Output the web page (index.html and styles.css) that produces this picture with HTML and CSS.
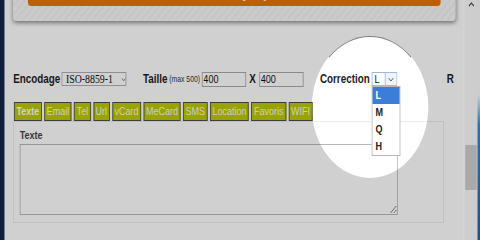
FILE: index.html
```html
<!DOCTYPE html>
<html>
<head>
    <title>QR Code</title>
    <link rel="stylesheet" href="styles.css">
</head>
<body>
    <div class="shot">
        <div class="frame-left"></div>
        <div class="page">
            <div class="card">
                <button class="submit" type="button">Submit Query</button>
            </div>
            <form class="options">
                <div class="row">
                    <div class="grp">
                        <label class="lbl">Encodage</label>
                        <div class="sel sel-enc">
                            <span class="val">ISO-8859-1</span>
                            <svg class="chev" width="7" height="5" viewBox="0 0 7 5"><polyline points="0.5,1 3.5,4 6.5,1" fill="none" stroke="#555" stroke-width="1"/></svg>
                        </div>
                    </div>
                    <div class="grp">
                        <label class="lbl">Taille</label>
                        <span class="hint">(max 500)</span>
                        <input class="num" type="text" value="400">
                        <span class="lbl times">X</span>
                        <input class="num" type="text" value="400">
                    </div>
                    <div class="grp">
                        <label class="lbl">Correction</label>
                        <div class="sel sel-cor">
                            <span class="val">L</span>
                            <span class="arrow">
                                <svg width="7" height="5" viewBox="0 0 7 5"><polyline points="0.5,1 3.5,4 6.5,1" fill="none" stroke="#555" stroke-width="1"/></svg>
                            </span>
                            <ul class="dropdown">
                                <li class="active">L</li>
                                <li>M</li>
                                <li>Q</li>
                                <li>H</li>
                            </ul>
                        </div>
                    </div>
                    <div class="grp grp-last">
                        <label class="lbl">R</label>
                    </div>
                </div>

                <div class="tabs">
                    <button type="button" class="tab active">Texte</button>
                    <button type="button" class="tab">Email</button>
                    <button type="button" class="tab">Tel</button>
                    <button type="button" class="tab">Url</button>
                    <button type="button" class="tab">vCard</button>
                    <button type="button" class="tab">MeCard</button>
                    <button type="button" class="tab">SMS</button>
                    <button type="button" class="tab">Location</button>
                    <button type="button" class="tab">Favoris</button>
                    <button type="button" class="tab">WIFI</button>
                </div>

                <div class="panel">
                    <label class="panel-label" for="texte">Texte</label>
                    <textarea id="texte"></textarea>
                </div>
            </form>
            <div class="spot"></div>
        </div>
        <div class="scrollbar">
            <svg class="up" width="7" height="5" viewBox="0 0 7 5"><polyline points="0.5,4 3.5,1 6.5,4" fill="none" stroke="#333" stroke-width="1.2"/></svg>
            <div class="thumb"></div>
        </div>
        <div class="frame-right"></div>
    </div>
</body>
</html>
```

FILE: styles.css
```css
* {
    box-sizing: border-box;
    font-family: 'Liberation Sans', Arial, sans-serif;
}

html, body {
    margin: 0;
    padding: 0;
    width: 480px;
    height: 240px;
    overflow: hidden;
    background-color: #d0d0d0;
}

/* the capture is squeezed horizontally */
.shot {
    display: flex;
    width: 585px;
    height: 240px;
    transform: scaleX(0.8205);
    transform-origin: 0 0;
}

.frame-left {
    width: 6px;
    background-color: #0e1e3c;
    border-right: 1px solid #7d8593;
}

.frame-right {
    width: 3px;
    background: linear-gradient(#c9ccd1 0, #c9ccd1 95px, #2b6fb6 125px, #1b4f8f 240px);
}

.page {
    position: relative;
    flex: 1;
    overflow: hidden;
    background-color: #ffffff;
}

.card {
    margin: -26px 10px 0;
    padding: 10px 18px 15px;
    border-radius: 0 0 4px 4px;
    background: repeating-linear-gradient(-45deg, #f3f3f3 0, #f3f3f3 3px, #f9f9f9 3px, #f9f9f9 6px);
    box-shadow: 0 2px 5px rgba(0, 0, 0, 0.45);
}

.submit {
    display: block;
    width: 100%;
    height: 22px;
    padding: 0 0 3px;
    border: none;
    border-radius: 4px;
    background-color: #eb7600;
    color: white;
    font-size: 14px;
    line-height: 19px;
}

.options {
    margin: 50px 10px 0;
    overflow: hidden;
}

.row {
    display: flex;
    align-items: center;
    height: 16px;
    white-space: nowrap;
}

.grp {
    display: flex;
    align-items: center;
    gap: 2px;
    margin-right: 20px;
}

.grp-last {
    margin-left: 41px;
}

.lbl {
    color: #222;
    font-size: 12px;
    font-weight: bold;
}

.times {
    margin: 0 2px;
}

.hint {
    color: #333;
    font-size: 8.4px;
}

.num {
    width: 54px;
    height: 15px;
    margin: 0;
    padding: 0 1px;
    border: 1px solid #aaa;
    background: white;
    color: #111;
    font-size: 11px;
    outline: none;
}

.sel {
    position: relative;
    display: flex;
    align-items: center;
    height: 14px;
    border: 1px solid #b0b0b0;
    background: white;
    color: #111;
}

.sel-enc {
    width: 79px;
    padding-left: 4px;
}

.sel-enc .val {
    font-family: 'Liberation Serif', serif;
    font-size: 12px;
}

.sel-enc .chev {
    margin-left: 10px;
}

.sel-cor {
    width: 31px;
    padding-left: 3px;
    border-color: #9db9dc;
}

.sel-cor .val {
    flex: 1;
    font-size: 11px;
    line-height: 12px;
}

.sel-cor .arrow {
    display: flex;
    align-items: center;
    justify-content: center;
    width: 14px;
    height: 12px;
    border-left: 1px solid #9db9dc;
    background-color: #eef4fc;
}

.dropdown {
    position: absolute;
    top: 13px;
    left: -1px;
    width: 35px;
    margin: 0;
    padding: 0;
    list-style: none;
    border: 1px solid #b8b8b8;
    background: white;
}

.dropdown li {
    height: 17px;
    padding-left: 4px;
    color: #222;
    font-size: 11px;
    font-weight: bold;
    line-height: 17px;
}

.dropdown li.active {
    background-color: #3b7dd8;
    color: white;
}

.tabs {
    display: flex;
    gap: 3px;
    height: 19px;
    margin-top: 15px;
    padding-left: 1px;
}

.tab {
    height: 19px;
    margin: 0;
    padding: 0 2px;
    border: 1px solid #4d4d4d;
    background-color: #bdc900;
    color: #fbfbef;
    font-size: 11px;
    line-height: 17px;
}

.tab.active {
    font-weight: bold;
    color: white;
}

.panel {
    width: 525px;
    padding: 6px 7px 7px;
    border: 1px solid #ebebeb;
}

.panel-label {
    display: block;
    margin-bottom: 2px;
    color: #444;
    font-size: 11px;
    font-weight: bold;
    line-height: 14px;
}

textarea {
    display: block;
    width: 461px;
    height: 71px;
    margin: 0;
    padding: 2px;
    border: 1px solid #b8b8b8;
    background: white;
    outline: none;
}

/* spotlight over the correction select */
.spot {
    position: absolute;
    left: 374px;
    top: 36px;
    width: 142px;
    height: 142px;
    border: 1px solid transparent;
    border-top-color: rgba(0, 0, 0, 0.5);
    border-radius: 50%;
    box-shadow: 0 0 0 1200px rgba(0, 0, 0, 0.185);
    pointer-events: none;
}

.scrollbar {
    width: 17px;
    border-left: 1px solid #dadada;
    background-color: #cdcdcd;
}

.scrollbar .up {
    display: block;
    margin: 2px auto 0;
}

.thumb {
    width: 14px;
    height: 45px;
    margin: 138px auto 0;
    background-color: #a9a9a9;
}
```
